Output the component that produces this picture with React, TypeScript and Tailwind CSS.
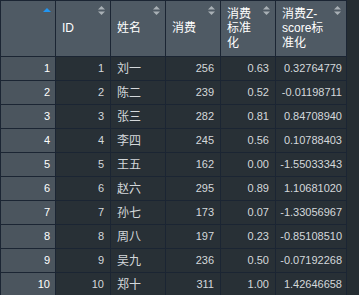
const rows = [
  { id: 1, name: '刘一', spend: 256, norm: '0.63', z: '0.32764779' },
  { id: 2, name: '陈二', spend: 239, norm: '0.52', z: '-0.01198711' },
  { id: 3, name: '张三', spend: 282, norm: '0.81', z: '0.84708940' },
  { id: 4, name: '李四', spend: 245, norm: '0.56', z: '0.10788403' },
  { id: 5, name: '王五', spend: 162, norm: '0.00', z: '-1.55033343' },
  { id: 6, name: '赵六', spend: 295, norm: '0.89', z: '1.10681020' },
  { id: 7, name: '孙七', spend: 173, norm: '0.07', z: '-1.33056967' },
  { id: 8, name: '周八', spend: 197, norm: '0.23', z: '-0.85108510' },
  { id: 9, name: '吴九', spend: 236, norm: '0.50', z: '-0.07192268' },
  { id: 10, name: '郑十', spend: 311, norm: '1.00', z: '1.42646658' },
]

const font = { fontFamily: '"Liberation Sans", "Noto Sans CJK SC", sans-serif' }

function SortIcon() {
  return (
    <svg width="7" height="9" viewBox="0 0 7 9" className="absolute right-[5px] top-[5px]">
      <path d="M3.5 0 L7 3.5 L0 3.5 Z" fill="#a9b0b6" />
      <path d="M0 5.5 L7 5.5 L3.5 9 Z" fill="#a9b0b6" />
    </svg>
  )
}

function HeaderCell({ lines }: { lines: string[] }) {
  return (
    <div className="relative flex flex-col justify-center bg-[#4f5a64] pl-[6px] text-[12px] leading-[14.5px] text-white">
      {lines.map((l) => (
        <span key={l}>{l}</span>
      ))}
      <SortIcon />
    </div>
  )
}

export default function App() {
  return (
    <div className="h-[295px] w-[359px] overflow-hidden bg-[#252d32]" style={font}>
      <div className="grid w-[347px] grid-cols-[54px_54px_54px_54px_54px_70px] grid-rows-[55px] auto-rows-[23px] gap-px border border-[#1b2533] bg-[#1b2533]">
        <div className="relative bg-[#4f5a64]">
          <svg width="8" height="4" viewBox="0 0 8 4" className="absolute right-[4px] top-[7px]">
            <path d="M4 0 L8 4 L0 4 Z" fill="#2196f3" />
          </svg>
        </div>
        <HeaderCell lines={['ID']} />
        <HeaderCell lines={['姓名']} />
        <HeaderCell lines={['消费']} />
        <HeaderCell lines={['消费', '标准', '化']} />
        <HeaderCell lines={['消费Z-', 'score标', '准化']} />

        {rows.map((r) => (
          <div key={r.id} className="contents text-[11px] text-[#d4d8db]">
            <div className="flex items-center justify-end bg-[#4b555e] pr-[5px] text-white">{r.id}</div>
            <div className="flex items-center justify-end bg-[#283036] pr-[6px]">{r.id}</div>
            <div className="flex items-center bg-[#283036] pl-[6px] text-[12px]">{r.name}</div>
            <div className="flex items-center justify-end bg-[#283036] pr-[6px]">{r.spend}</div>
            <div className="flex items-center justify-end bg-[#283036] pr-[6px]">{r.norm}</div>
            <div className="flex items-center justify-end bg-[#283036] pr-[4px]">{r.z}</div>
          </div>
        ))}
      </div>
    </div>
  )
}
